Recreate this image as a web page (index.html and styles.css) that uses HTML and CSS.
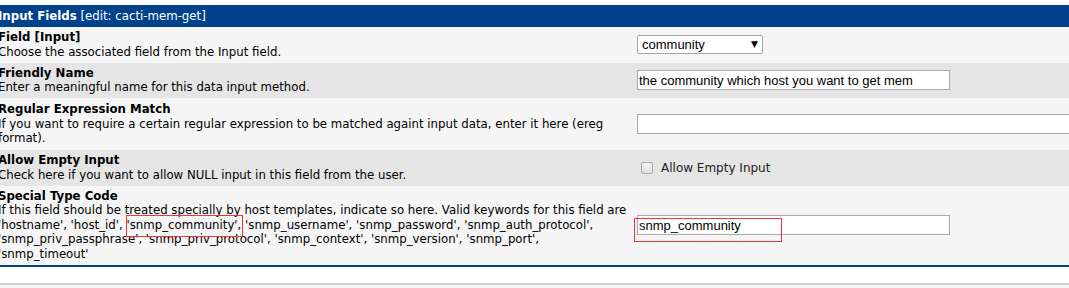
FILE: index.html
```html
<!DOCTYPE html>
<html lang="en">

<head>
    <meta charset="UTF-8">
    <link rel="stylesheet" href="styles.css">
    <title>Data Input Methods</title>
</head>

<body>
    <div class="page">
        <div class="header">
            <b>Input Fields</b> <span class="header-edit">[edit: cacti-mem-get]</span>
        </div>

        <div class="row light">
            <div class="label">
                <div class="title">Field [Input]</div>
                Choose the associated field from the Input field.
            </div>
            <div class="field">
                <div class="select-wrap">
                    <select class="select">
                        <option>community</option>
                    </select>
                    <span class="select-arrow">&#9660;</span>
                </div>
            </div>
        </div>

        <div class="row dark">
            <div class="label">
                <div class="title">Friendly Name</div>
                Enter a meaningful name for this data input method.
            </div>
            <div class="field">
                <input type="text" class="text-input" value="the community which host you want to get mem">
            </div>
        </div>

        <div class="row light">
            <div class="label tall">
                <div class="title">Regular Expression Match</div>
                If you want to require a certain regular expression to be matched againt input data, enter it here (ereg format).
            </div>
            <div class="field">
                <input type="text" class="text-input wide" value="">
            </div>
        </div>

        <div class="row dark">
            <div class="label">
                <div class="title">Allow Empty Input</div>
                Check here if you want to allow NULL input in this field from the user.
            </div>
            <div class="field">
                <label class="check">
                    <span class="check-box"></span>
                    Allow Empty Input
                </label>
            </div>
        </div>

        <div class="row light">
            <div class="label">
                <div class="title">Special Type Code</div>
                If this field should be treated specially by host templates, indicate so here. Valid keywords for this field are 'hostname', 'host_id', <span class="marked">'snmp_community',</span> 'snmp_username', 'snmp_password', 'snmp_auth_protocol', 'snmp_priv_passphrase', 'snmp_priv_protocol', 'snmp_context', 'snmp_version', 'snmp_port', 'snmp_timeout'
            </div>
            <div class="field">
                <div class="marked-input">
                    <input type="text" class="text-input" value="snmp_community">
                </div>
            </div>
        </div>

        <div class="bottom-line"></div>
        <div class="next-table"></div>
    </div>
</body>

</html>
```

FILE: styles.css
```css
body {
    margin: 0;
    overflow: hidden;
    background-color: #fff;
    font-family: "DejaVu Sans", Verdana, sans-serif;
    font-size: 11.75px;
    color: #000;
}

.page {
    margin-left: -3px;
    padding-top: 5px;
    width: 1080px;
}

.header {
    background-color: #00438c;
    color: #fff;
    height: 22px;
    line-height: 22px;
    padding-left: 1px;
}

.header-edit {
    font-weight: normal;
}

.row {
    display: grid;
    grid-template-columns: 639px 1fr;
    align-items: center;
}

.light {
    background-color: #f5f5f5;
}

.dark {
    background-color: #e5e5e5;
}

.label {
    line-height: 14.5px;
    padding: 3px 6px 3.5px 1px;
    align-self: start;
}

.label.tall {
    padding-top: 4px;
    padding-bottom: 4.5px;
}

.title {
    font-weight: bold;
}

.field {
    padding-left: 1px;
}

/* select box */
.select-wrap {
    position: relative;
    width: 126px;
}

.select {
    appearance: none;
    width: 126px;
    height: 19px;
    border: 1px solid #a6a6a6;
    border-radius: 2px;
    background-color: #fff;
    font-family: "Liberation Sans", Arial, sans-serif;
    font-size: 13px;
    color: #000;
    padding: 0 0 0 4px;
}

.select-arrow {
    position: absolute;
    left: 114px;
    top: 4px;
    font-size: 9px;
    line-height: 10px;
    pointer-events: none;
}

.text-input {
    box-sizing: border-box;
    width: 313px;
    height: 20px;
    border: 1px solid #a9a9a9;
    background-color: #fff;
    font-family: "Liberation Sans", Arial, sans-serif;
    font-size: 13px;
    color: #000;
    padding: 0 1px;
    margin: 0;
}

.text-input.wide {
    width: 520px;
}

.check {
    display: flex;
    align-items: center;
    gap: 8px;
    padding-left: 4px;
    font-size: 12px;
    color: #222;
}

.check-box {
    box-sizing: border-box;
    width: 12px;
    height: 12px;
    border: 1px solid #a8a8a8;
    border-radius: 2px;
    background: linear-gradient(#f4f4f4, #dedede);
}

/* red annotation boxes */
.marked {
    position: relative;
}

.marked::after {
    content: "";
    position: absolute;
    left: -1px;
    right: -2px;
    top: -3px;
    bottom: -5px;
    border: 1px solid #e53935;
}

.marked-input {
    position: relative;
    width: 313px;
}

.marked-input::after {
    content: "";
    position: absolute;
    left: -3px;
    top: 3px;
    width: 146px;
    height: 22px;
    border: 1px solid #e53935;
}

.bottom-line {
    height: 2px;
    background-color: #00438c;
}

.next-table {
    margin-top: 16px;
    height: 10px;
    border-top: 2px solid #cfcfcf;
    background-color: #f5f5f5;
}
```
